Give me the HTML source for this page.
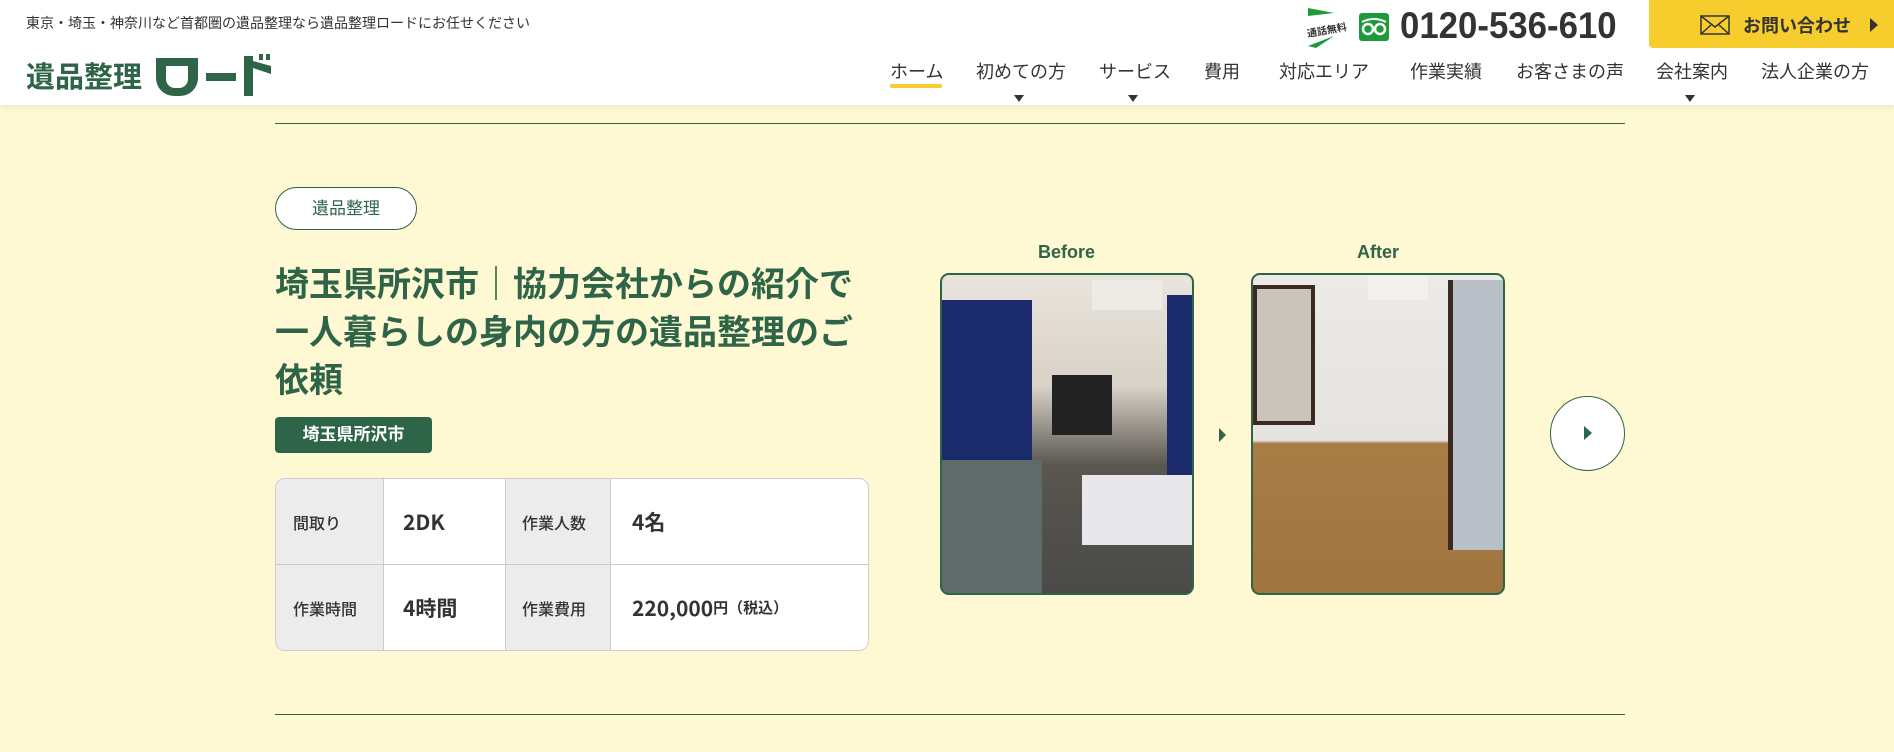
<!DOCTYPE html>
<html><head><meta charset="utf-8"><style>
*{margin:0;padding:0;box-sizing:border-box}
body{width:1894px;height:752px;overflow:hidden;background:#fff9d3;font-family:"Liberation Sans","Noto Sans CJK JP",sans-serif;position:relative;color:#333}
.a{position:absolute}
header{position:absolute;left:0;top:0;width:1894px;height:105px;background:#fff;box-shadow:0 2px 6px rgba(0,0,0,.08)}
.nav span{position:absolute;top:58px;font-size:18px;color:#333;white-space:nowrap}
.tri{position:absolute;top:95px;width:0;height:0;border-left:5px solid transparent;border-right:5px solid transparent;border-top:7px solid #333}
.g{color:#2e6447}
.c{position:absolute;height:85px;display:flex;align-items:center;font-family:"Noto Sans CJK JP",sans-serif}
.l{font-size:16px;font-weight:500}
.v{font-size:21px;font-weight:bold}
</style></head><body>
<header>
<div class="a" style="left:26px;top:13px;font-size:14px;color:#333">東京・埼玉・神奈川など首都圏の遺品整理なら遺品整理ロードにお任せください</div>
<div class="a g" style="left:26px;top:54px;font-size:29px;font-weight:bold;letter-spacing:0">遺品整理</div>
<svg class="a" style="left:154px;top:54px" width="124" height="44" viewBox="0 0 124 44"><path d="M2 4h42v20a18 18 0 0 1-18 18h-6A18 18 0 0 1 2 24Z M12 12v13a9 9 0 0 0 9 9h4a9 9 0 0 0 9-9V12Z" fill="#2e6447" fill-rule="evenodd"/><rect x="52" y="19" width="30" height="8" fill="#2e6447"/><rect x="90" y="2" width="9" height="40" fill="#2e6447"/><path d="M99 14l18 6v-8l-18-5Z" fill="#2e6447"/><rect x="105" y="0" width="4" height="6" fill="#2e6447"/><rect x="112" y="0" width="4" height="6" fill="#2e6447"/></svg>
<svg class="a" style="left:1305px;top:6px" width="42" height="42"><path d="M3 2l26 5-26 3Z M3 40l26-10-18 12Z" fill="#1e9a3b"/><text x="2" y="28" font-size="10" font-weight="bold" fill="#333" transform="rotate(-10 20 25)" font-family="Noto Sans CJK JP">通話無料</text></svg>
<div class="a" style="left:1359px;top:13px;width:30px;height:28px;background:#1e9a3b;border-radius:3px"><svg width="30" height="28"><circle cx="9" cy="16" r="5" fill="none" stroke="#fff" stroke-width="2.5"/><circle cx="21" cy="16" r="5" fill="none" stroke="#fff" stroke-width="2.5"/><path d="M3 9q12-6 24 0" stroke="#fff" stroke-width="2" fill="none"/></svg></div>
<div class="a" style="left:1400px;top:5px;font-size:37px;font-weight:bold;color:#333;transform:scaleX(.94);transform-origin:left">0120-536-610</div>
<div class="a" style="left:1649px;top:0;width:245px;height:48px;background:#f6cd2c;border-radius:0 0 0 4px"></div>
<svg class="a" style="left:1700px;top:15px" width="30" height="20"><rect x="1" y="1" width="28" height="18" fill="none" stroke="#333" stroke-width="1.5"/><path d="M1 1l14 11 14-11M1 19l10-9M29 19l-10-9" fill="none" stroke="#333" stroke-width="1.5"/></svg>
<div class="a" style="left:1743px;top:12px;font-size:18px;font-weight:bold;color:#333">お問い合わせ</div>
<div class="a" style="left:1870px;top:18px;border-top:7px solid transparent;border-bottom:7px solid transparent;border-left:8px solid #333"></div>
<div class="nav">
<span style="left:890px">ホーム</span>
<span style="left:976px">初めての方</span>
<span style="left:1099px">サービス</span>
<span style="left:1204px">費用</span>
<span style="left:1279px">対応エリア</span>
<span style="left:1410px">作業実績</span>
<span style="left:1516px">お客さまの声</span>
<span style="left:1656px">会社案内</span>
<span style="left:1761px">法人企業の方</span>
</div>
<div class="a" style="left:890px;top:84px;width:52px;height:4px;background:#f6cd2c;border-radius:2px"></div>
<div class="tri" style="left:1014px"></div><div class="tri" style="left:1128px"></div><div class="tri" style="left:1685px"></div>
</header>
<div class="a" style="left:275px;top:123px;width:1350px;height:1px;background:#2e6447"></div>
<div class="a" style="left:275px;top:714px;width:1350px;height:1px;background:#2e6447"></div>
<div class="a g" style="left:275px;top:187px;width:142px;height:43px;border:1px solid #2e6447;border-radius:22px;background:#fff;text-align:center;line-height:41px;font-size:17px">遺品整理</div>
<div class="a g" style="left:275px;top:261px;width:600px;font-size:34px;font-weight:bold;line-height:48px">埼玉県所沢市｜協力会社からの紹介で一人暮らしの身内の方の遺品整理のご依頼</div>
<div class="a" style="left:275px;top:417px;width:157px;height:36px;background:#2e6447;border-radius:4px;color:#fff;text-align:center;line-height:36px;font-size:17px;font-weight:bold">埼玉県所沢市</div>
<div class="a" style="left:275px;top:478px;width:594px;height:173px;border:1px solid #ccc;border-radius:10px;overflow:hidden;background:#fff">
<div class="a" style="left:0;top:0;width:107px;height:173px;background:#ececec"></div>
<div class="a" style="left:229px;top:0;width:106px;height:173px;background:#ececec;border-left:1px solid #ccc;border-right:1px solid #ccc"></div>
<div class="a" style="left:107px;top:0;width:1px;height:173px;background:#ccc"></div>
<div class="a" style="left:0;top:85px;width:594px;height:1px;background:#ccc"></div>
<div class="c l" style="left:17px;top:0">間取り</div>
<div class="c v" style="left:127px;top:0">2DK</div>
<div class="c l" style="left:246px;top:0">作業人数</div>
<div class="c v" style="left:356px;top:0">4名</div>
<div class="c l" style="left:17px;top:86px">作業時間</div>
<div class="c v" style="left:127px;top:86px">4時間</div>
<div class="c l" style="left:246px;top:86px">作業費用</div>
<div class="c v" style="left:356px;top:86px">220,000<span style="font-size:15px">円（税込）</span></div>
</div>
<div class="a g" style="left:1038px;top:242px;font-size:18px;font-weight:bold">Before</div>
<div class="a g" style="left:1357px;top:242px;font-size:18px;font-weight:bold">After</div>
<div class="a" style="left:940px;top:273px;width:254px;height:322px;border:2px solid #2e6447;border-radius:9px;overflow:hidden;background:linear-gradient(180deg,#e9e4dc 0%,#d8d2c8 35%,#5a5650 60%,#4a4a48 100%)">
<div class="a" style="left:0;top:25px;width:90px;height:190px;background:#1b2a6b"></div>
<div class="a" style="left:225px;top:20px;width:30px;height:190px;background:#1b2a6b"></div>
<div class="a" style="left:150px;top:5px;width:70px;height:30px;background:#ecebe6"></div>
<div class="a" style="left:0;top:185px;width:100px;height:137px;background:#5f6b6a"></div>
<div class="a" style="left:140px;top:200px;width:115px;height:70px;background:#e8e8ec"></div>
<div class="a" style="left:110px;top:100px;width:60px;height:60px;background:#222"></div>
</div>
<div class="a" style="left:1219px;top:428px;border-top:7px solid transparent;border-bottom:7px solid transparent;border-left:7px solid #2e6447"></div>
<div class="a" style="left:1251px;top:273px;width:254px;height:322px;border:2px solid #2e6447;border-radius:9px;overflow:hidden;background:linear-gradient(180deg,#eceae6 0%,#e6e4e0 52%,#a87c45 53%,#a07540 100%)">
<div class="a" style="left:0;top:10px;width:62px;height:140px;background:#c9c4bc;border:4px solid #3b2a20"></div>
<div class="a" style="left:195px;top:5px;width:60px;height:270px;background:#b9bfc6;border-left:5px solid #3b2a20"></div>
<div class="a" style="left:115px;top:0;width:60px;height:25px;background:#f2f1ec"></div>
</div>
<div class="a" style="left:1550px;top:396px;width:75px;height:75px;border:1px solid #2e6447;border-radius:50%;background:#fff"></div>
<div class="a" style="left:1584px;top:426px;border-top:7px solid transparent;border-bottom:7px solid transparent;border-left:8px solid #2e6447"></div>
</body></html>
